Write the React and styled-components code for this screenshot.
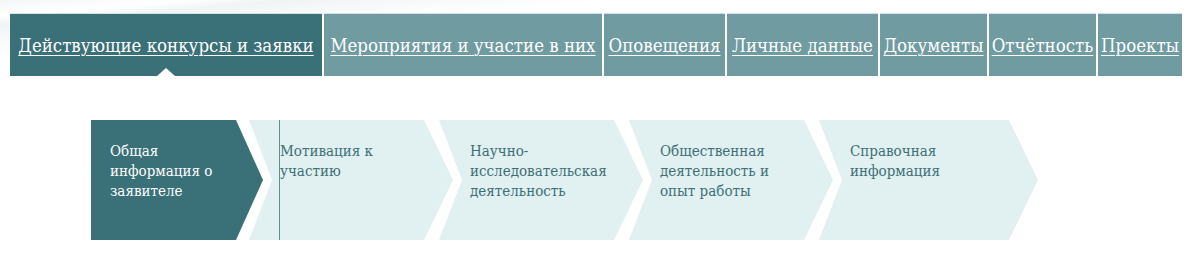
import React from 'react';
import styled, { createGlobalStyle } from 'styled-components';

const GlobalStyle = createGlobalStyle`
	html, body {
		margin: 0;
		padding: 0;
		background: #ffffff;
		font-family: 'DejaVu Serif', 'Liberation Serif', serif;
	}
`;

const tabs = [
	{ title: 'Действующие конкурсы и заявки', width: 312, active: true },
	{ title: 'Мероприятия и участие в них', width: 278 },
	{ title: 'Оповещения', width: 121 },
	{ title: 'Личные данные', width: 151 },
	{ title: 'Документы', width: 107 },
	{ title: 'Отчётность', width: 107 },
	{ title: 'Проекты', width: 84 },
];

const steps = [
	{ title: 'Общая информация о заявителе', width: 172, active: true },
	{ title: 'Мотивация к участию', width: 204, marked: true },
	{ title: 'Научно-исследовательская деятельность', width: 204 },
	{ title: 'Общественная деятельность и опыт работы', width: 204 },
	{ title: 'Справочная информация', width: 219 },
];

function App() {
	return (
		<Page>
			<GlobalStyle />
			<Header>
				<TabBar>
					{tabs.map((tab) => (
						<Tab key={tab.title} $active={tab.active} $width={tab.width}>
							<TabLink href='#'>{tab.title}</TabLink>
						</Tab>
					))}
				</TabBar>
			</Header>
			<Steps>
				{steps.map((step, i) => (
					<Step key={step.title} $active={step.active} $first={i === 0} $width={step.width}>
						<StepText $marked={step.marked}>{step.title}</StepText>
					</Step>
				))}
			</Steps>
		</Page>
	);
}

const Page = styled.div`
	width: 1200px;
	height: 256px;
	overflow: hidden;
	background: #ffffff;
`;

const Header = styled.header`
	padding: 13px 0 0 10px;
	background: linear-gradient(175deg, #f4f6f7 0%, #ffffff 9%, #f1f4f5 14%, #ffffff 30%);
`;

const TabBar = styled.nav`
	display: flex;
	gap: 2px;
	height: 63px;
	background: #ffffff;
`;

const Tab = styled.div`
	position: relative;
	display: flex;
	align-items: center;
	justify-content: center;
	width: ${(p) => p.$width}px;
	flex: none;
	padding-top: 2px;
	box-sizing: border-box;
	background: ${(p) => (p.$active ? '#3a7078' : '#6f9ba1')};
	box-shadow: inset 0 1px 0 #d3e1e3;

	&::after {
		content: '';
		display: ${(p) => (p.$active ? 'block' : 'none')};
		position: absolute;
		left: 50%;
		bottom: 0;
		margin-left: -9px;
		border-left: 9px solid transparent;
		border-right: 9px solid transparent;
		border-bottom: 8px solid #ffffff;
	}
`;

const TabLink = styled.a`
	color: #ffffff;
	font-family: 'DejaVu Serif Condensed', 'DejaVu Serif', serif;
	font-size: 18.5px;
	white-space: nowrap;
	text-decoration: underline;
	text-underline-offset: 3px;
	text-decoration-thickness: 1px;
`;

const Steps = styled.div`
	display: flex;
	margin: 44px 0 0 91px;
	height: 120px;
`;

const Step = styled.div`
	display: flex;
	flex: none;
	width: ${(p) => p.$width}px;
	margin-left: ${(p) => (p.$first ? 0 : -14)}px;
	padding-left: ${(p) => (p.$first ? 19 : 31)}px;
	box-sizing: border-box;
	background: ${(p) => (p.$active ? '#3a7078' : '#e1f0f1')};
	color: ${(p) => (p.$active ? '#ffffff' : '#3d6f75')};
	clip-path: ${(p) =>
		p.$first
			? 'polygon(0 0, calc(100% - 27px) 0, 100% 50%, calc(100% - 27px) 100%, 0 100%)'
			: 'polygon(0 0, calc(100% - 29px) 0, 100% 50%, calc(100% - 29px) 100%, 0 100%, 23px 50%)'};
`;

const StepText = styled.div`
	width: 140px;
	padding-top: 21px;
	font-family: 'DejaVu Serif Condensed', 'DejaVu Serif', serif;
	font-size: 15px;
	line-height: 20px;
	border-left: ${(p) => (p.$marked ? '1px solid #5e8f95' : 'none')};
	margin-left: ${(p) => (p.$marked ? -1 : 0)}px;
`;

export default App;
